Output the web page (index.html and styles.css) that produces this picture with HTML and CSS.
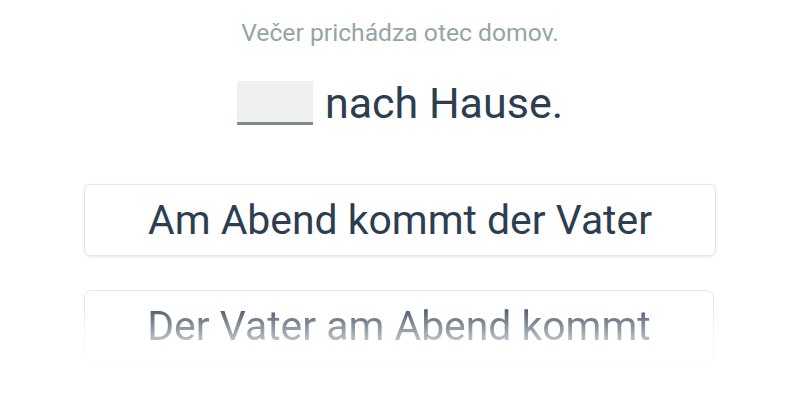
FILE: index.html
```html
<!DOCTYPE html>
<html>
	<head>
		<meta charset="utf-8">
		<title>Poradie slov</title>
		<link rel="stylesheet" href="styles.css">
	</head>
	<body>
		<div class="quiz">
			<p class="hint">Večer prichádza otec domov.</p>
			<h2 class="sentence"><span class="blank"></span> nach Hause.</h2>
			<ul class="options">
				<li class="option">Am Abend kommt der Vater</li>
				<li class="option fade">Der Vater am Abend kommt</li>
			</ul>
		</div>
	</body>
</html>
```

FILE: styles.css
```css
body, h2, p, ul{
	margin: 0;
	padding: 0;
}
body{
	background: #fff;
	font-family: Roboto, "Noto Sans", sans-serif;
}
.quiz{
	width: 632px;
	margin: 0 auto;
	padding-top: 18px;
	display: flex;
	flex-direction: column;
	align-items: center;
}
.hint{
	font-size: 24.7px;
	line-height: 30px;
	color: #95a5a6;
}
.sentence{
	margin-top: 31px;
	font-size: 43px;
	font-weight: normal;
	line-height: 48px;
	color: #2c3e50;
	display: flex;
	align-items: center;
}
.blank{
	display: inline-block;
	width: 76px;
	height: 41px;
	background: #eef0f2;
	border-bottom: 3px solid #7f8c8d;
	margin-right: 12px;
}
.options{
	list-style: none;
	width: 100%;
	margin-top: 57px;
	display: flex;
	flex-direction: column;
	gap: 34px;
}
.option{
	height: 70px;
	line-height: 70px;
	text-align: center;
	font-size: 40.9px;
	color: #2c3e50;
	background: #fff;
	border: 1px solid #e4e6e8;
	border-radius: 7px;
	box-shadow: 0 1px 3px rgba(0,0,0,0.1);
}
.fade{
	width: 628px;
	-webkit-mask-image: linear-gradient(to bottom, #000 12%, rgba(0,0,0,0.3) 72%, rgba(0,0,0,0.15));
	mask-image: linear-gradient(to bottom, #000 12%, rgba(0,0,0,0.3) 72%, rgba(0,0,0,0.15));
}
```
